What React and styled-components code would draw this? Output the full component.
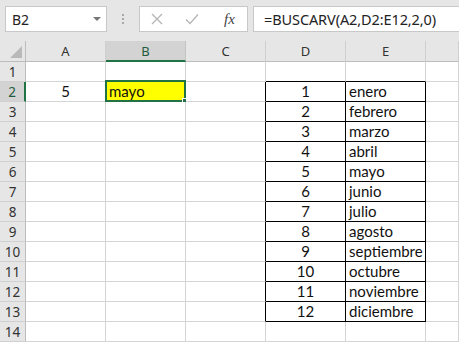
import React from "react";
import styled, { createGlobalStyle } from "styled-components";

const Global = createGlobalStyle`
  html, body { margin: 0; padding: 0; background: #ffffff; overflow: hidden; }
  body { width: 459px; height: 342px; }
`;

const Page = styled.div`
  width: 459px;
  height: 342px;
  overflow: hidden;
  background: #fff;
`;

const Toolbar = styled.div`
  height: 41px;
  box-sizing: border-box;
  background: #e6e6e6;
  display: flex;
  align-items: flex-start;
  padding: 6px 0 0 5px;
  font-family: "Noto Sans", "Open Sans", sans-serif;
`;

const NameBox = styled.div`
  width: 102px;
  height: 26px;
  box-sizing: border-box;
  background: #fff;
  border: 1px solid #c8c8c8;
  display: flex;
  align-items: center;
  justify-content: space-between;
  padding: 0 5px 0 6px;
  font-size: 14px;
  color: #222;
`;

const Caret = styled.span`
  width: 0;
  height: 0;
  border-left: 4px solid transparent;
  border-right: 4px solid transparent;
  border-top: 4px solid #777;
`;

const Grip = styled.div`
  width: 32px;
  height: 26px;
  display: flex;
  flex-direction: column;
  align-items: center;
  justify-content: center;
  gap: 2px;
  span {
    width: 2px;
    height: 2px;
    background: #a8a8a8;
  }
`;

const FxBox = styled.div`
  width: 109px;
  height: 26px;
  box-sizing: border-box;
  background: #fff;
  border: 1px solid #c8c8c8;
  display: flex;
  align-items: center;
  padding-left: 4px;
`;

const FxButton = styled.span`
  width: ${(p) => p.$w}px;
  display: flex;
  align-items: center;
  justify-content: center;
  color: #bbbbbb;
`;

const FxLabel = styled.span`
  font-family: "Liberation Serif", serif;
  font-style: italic;
  font-size: 15px;
  color: #444;
  margin-left: 10px;
`;

const FormulaInput = styled.div`
  flex: 1;
  height: 26px;
  box-sizing: border-box;
  margin-left: 5px;
  background: #fff;
  border: 1px solid #c8c8c8;
  border-right: none;
  display: flex;
  align-items: center;
  padding-left: 10px;
  font-size: 14.5px;
  color: #222;
  letter-spacing: -0.1px;
`;

const Sheet = styled.div`
  display: grid;
  grid-template-columns: 26px 80px 80px 80px 80px 80px 1fr;
  grid-template-rows: 21px repeat(14, 20px);
`;

const Corner = styled.div`
  background: #e6e6e6;
  border-right: 1px solid #bdbdbd;
  border-bottom: 1px solid #bdbdbd;
  box-sizing: border-box;
  display: flex;
  align-items: flex-end;
  justify-content: flex-end;
  padding: 0 3px 3px 0;
`;

const CornerTri = styled.span`
  width: 0;
  height: 0;
  border-left: 12px solid transparent;
  border-bottom: 12px solid #b9b9b9;
`;

const ColHeader = styled.div`
  box-sizing: border-box;
  background: ${(p) => (p.$active ? "#d3d3d3" : "#e6e6e6")};
  border-right: 1px solid ${(p) => (p.$active ? "#c3c3c3" : "#cfcfcf")};
  border-bottom: ${(p) => (p.$active ? "2px solid #217346" : "1px solid #bdbdbd")};
  padding-top: ${(p) => (p.$active ? "1px" : "0")};
  display: flex;
  align-items: center;
  justify-content: center;
  font-family: "Noto Sans", "Open Sans", sans-serif;
  font-size: 13px;
  color: ${(p) => (p.$active ? "#1f5c3b" : "#333")};
`;

const RowHeader = styled.div`
  box-sizing: border-box;
  background: ${(p) => (p.$active ? "#d3d3d3" : "#e6e6e6")};
  border-right: ${(p) => (p.$active ? "2px solid #217346" : "1px solid #bdbdbd")};
  border-bottom: 1px solid #d0d0d0;
  display: flex;
  align-items: center;
  justify-content: center;
  padding-top: 1px;
  font-family: "Noto Sans", "Open Sans", sans-serif;
  font-size: 13.5px;
  color: ${(p) => (p.$active ? "#1f5c3b" : "#333")};
`;

const Cell = styled.div`
  position: relative;
  box-sizing: border-box;
  background: ${(p) => p.$fill || "#fff"};
  border-right: 1px solid ${(p) => (p.$br ? "#000" : "#d4d4d4")};
  border-bottom: 1px solid ${(p) => (p.$bb ? "#000" : "#d4d4d4")};
  display: flex;
  align-items: flex-end;
  justify-content: ${(p) =>
    p.$align === "center" ? "center" : p.$align === "right" ? "flex-end" : "flex-start"};
  padding: 0 3px 0 3px;
  font-family: Lato, "Open Sans", sans-serif;
  font-size: 15px;
  line-height: 19px;
  color: #111;
  white-space: nowrap;
`;

const Selection = styled.div`
  position: absolute;
  top: -2px;
  left: -1px;
  right: -1px;
  bottom: -1px;
  border: 2px solid #217346;
  pointer-events: none;
`;

const FillHandle = styled.span`
  position: absolute;
  right: -5px;
  bottom: -5px;
  width: 5px;
  height: 5px;
  background: #217346;
  border: 1px solid #fff;
`;

const cols = ["A", "B", "C", "D", "E", "F"];
const months = [
  "enero",
  "febrero",
  "marzo",
  "abril",
  "mayo",
  "junio",
  "julio",
  "agosto",
  "septiembre",
  "octubre",
  "noviembre",
  "diciembre",
];

function cellProps(r, c) {
  const inTable = r >= 2 && r <= 13;
  const props = { $br: false, $bb: false, content: null, $align: "left" };
  if (inTable && (c === 2 || c === 3 || c === 4)) props.$br = true;
  if ((r === 1 || inTable) && (c === 3 || c === 4)) props.$bb = true;
  if (inTable && c === 3) {
    props.content = String(r - 1);
    props.$align = "center";
  }
  if (inTable && c === 4) {
    props.content = months[r - 2];
  }
  if (r === 2 && c === 0) {
    props.content = "5";
    props.$align = "center";
  }
  if (r === 2 && c === 1) {
    props.content = "mayo";
    props.$fill = "#ffff00";
    props.selected = true;
  }
  return props;
}

export default function App() {
  const rows = [];
  for (let r = 1; r <= 14; r++) {
    rows.push(
      <RowHeader key={`rh${r}`} $active={r === 2}>
        {r}
      </RowHeader>
    );
    for (let c = 0; c < 6; c++) {
      const { content, selected, ...p } = cellProps(r, c);
      rows.push(
        <Cell key={`c${r}-${c}`} {...p}>
          {content}
          {selected && (
            <Selection>
              <FillHandle />
            </Selection>
          )}
        </Cell>
      );
    }
  }

  return (
    <Page>
      <Global />
      <Toolbar>
        <NameBox>
          <span>B2</span>
          <Caret />
        </NameBox>
        <Grip>
          <span />
          <span />
          <span />
        </Grip>
        <FxBox>
          <FxButton $w={26}>
            <svg width="12" height="12" viewBox="0 0 12 12">
              <path d="M1 1 L11 11 M11 1 L1 11" stroke="#b5b5b5" strokeWidth="1.3" fill="none" />
            </svg>
          </FxButton>
          <FxButton $w={44}>
            <svg width="14" height="12" viewBox="0 0 14 12">
              <path d="M1 6.5 L5 10.5 L13 1.5" stroke="#b5b5b5" strokeWidth="1.3" fill="none" />
            </svg>
          </FxButton>
          <FxLabel>fx</FxLabel>
        </FxBox>
        <FormulaInput>=BUSCARV(A2,D2:E12,2,0)</FormulaInput>
      </Toolbar>
      <Sheet>
        <Corner>
          <CornerTri />
        </Corner>
        {cols.map((c) => (
          <ColHeader key={c} $active={c === "B"}>
            {c === "F" ? "" : c}
          </ColHeader>
        ))}
        {rows}
      </Sheet>
    </Page>
  );
}
